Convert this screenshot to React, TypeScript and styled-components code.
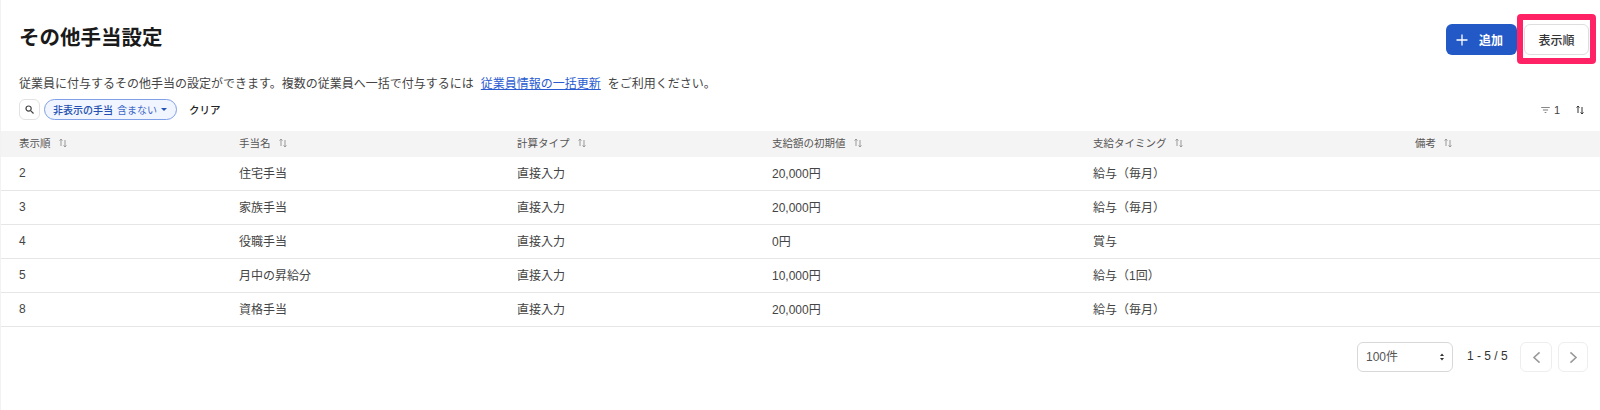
import React from "react";
import styled, { createGlobalStyle } from "styled-components";

const Global = createGlobalStyle`
  html, body { margin: 0; padding: 0; background: #fff; }
  body { font-family: "Liberation Sans", "Noto Sans CJK JP", sans-serif; color: #333; font-size: 12px; }
`;

const Page = styled.div`
  width: 1600px;
  height: 410px;
  box-sizing: border-box;
  overflow: hidden;
  border-left: 1px solid #f2f2f2;
  display: flex;
  flex-direction: column;
`;

const Head = styled.header`
  display: flex;
  justify-content: space-between;
  align-items: flex-start;
  height: 62px;
  padding: 14px 4px 0 18px;
`;

const Title = styled.h1`
  margin: 10px 0 0;
  font-size: 20.5px;
  line-height: 28px;
  font-weight: 700;
  color: #1a1a1a;
`;

const Actions = styled.div`
  display: flex;
  align-items: flex-start;
`;

const AddButton = styled.button`
  width: 71px;
  height: 31px;
  margin-top: 10px;
  border: 0;
  border-radius: 6px;
  background: #2359c6;
  color: #fff;
  font: 700 12px "Liberation Sans", "Noto Sans CJK JP", sans-serif;
  display: flex;
  align-items: center;
  justify-content: center;
  gap: 11px;
  padding: 0 4px 0 0;
`;

const Highlight = styled.div`
  box-sizing: border-box;
  width: 79px;
  height: 50px;
  border: 6px solid #ff2366;
  border-radius: 4px;
  padding: 4px 1px;
`;

const OrderButton = styled.button`
  box-sizing: border-box;
  width: 65px;
  height: 31px;
  border: 1px solid #dedede;
  border-radius: 6px;
  background: #fff;
  color: #333;
  font: 500 12px "Liberation Sans", "Noto Sans CJK JP", sans-serif;
  padding: 0;
`;

const Description = styled.p`
  margin: 0;
  padding-left: 18px;
  height: 16px;
  line-height: 16px;
  font-size: 12px;
  color: #444;
`;

const DocLink = styled.a`
  color: #2a5bd0;
  text-decoration: underline;
  margin: 0 7px;
`;

const FilterBar = styled.div`
  display: flex;
  align-items: center;
  height: 21px;
  margin-top: 7px;
  padding-left: 18px;
  padding-right: 16px;
`;

const SearchBox = styled.div`
  box-sizing: border-box;
  width: 21px;
  height: 21px;
  border: 1px solid #e2e2e2;
  border-radius: 6px;
  display: flex;
  align-items: center;
  justify-content: center;
  margin-right: 4px;
`;

const Chip = styled.div`
  box-sizing: border-box;
  width: 133px;
  height: 21px;
  border: 1px solid #7f9fe6;
  background: #f1f5ff;
  border-radius: 11px;
  color: #3f69c9;
  font-size: 10px;
  display: flex;
  align-items: center;
  padding-left: 8px;
  white-space: nowrap;
`;

const ChipStrong = styled.span`
  font-weight: 500;
  color: #2350b0;
  margin-right: 4px;
`;

const Caret = styled.span`
  width: 0;
  height: 0;
  margin-left: 4px;
  border-left: 3px solid transparent;
  border-right: 3px solid transparent;
  border-top: 3px solid #2451b5;
`;

const Clear = styled.span`
  margin-left: 12px;
  font-size: 10.5px;
  font-weight: 500;
  color: #222;
`;

const BarRight = styled.div`
  margin-left: auto;
  display: flex;
  align-items: center;
  gap: 4px;
  font-size: 11px;
  color: #444;
`;

const FilterGlyph = styled.svg`
  width: 9px;
  height: 6px;
`;

const CountIcons = styled.span`
  display: flex;
  align-items: center;
  margin-left: 12px;
`;

const Row = styled.div<{ $header?: boolean }>`
  display: grid;
  grid-template-columns: 220px 278px 255px 321px 322px 1fr;
  align-items: center;
  padding-left: 18px;
  box-sizing: border-box;
  height: ${(p) => (p.$header ? "26px" : "34px")};
  background: ${(p) => (p.$header ? "#f5f4f4" : "#fff")};
  border-bottom: ${(p) => (p.$header ? "0" : "1px solid #e6e6e6")};
  font-size: ${(p) => (p.$header ? "10.5px" : "12px")};
  color: ${(p) => (p.$header ? "#555" : "#444")};
`;

const TableHead = styled.div`
  margin-top: 11px;
`;

const HeadCell = styled.div`
  display: flex;
  align-items: center;
  gap: 8px;
  padding-bottom: 3px;
`;

const Cell = styled.div`
  padding-bottom: 2px;
`;

const Footer = styled.div`
  display: flex;
  align-items: center;
  height: 30px;
  margin-top: 15px;
  padding-left: 1356px;
`;

const PageSelect = styled.div`
  box-sizing: border-box;
  width: 96px;
  height: 30px;
  border: 1px solid #d8d8d8;
  border-radius: 6px;
  display: flex;
  align-items: center;
  justify-content: space-between;
  padding: 0 8px 0 8px;
  font-size: 12px;
  color: #555;
`;

const SelectLabel = styled.span`
  margin-top: -3px;
`;

const RangeText = styled.span`
  margin-left: 14px;
  margin-top: -3px;
  font-size: 12px;
  color: #333;
  width: 53px;
`;

const PagerButton = styled.button<{ $next?: boolean }>`
  box-sizing: border-box;
  width: ${(p) => (p.$next ? "30px" : "32px")};
  height: 30px;
  margin-right: 6px;
  border: 1px solid #eeeeee;
  border-radius: 6px;
  background: #fff;
  padding: 0;
  display: flex;
  align-items: center;
  justify-content: center;
`;

const SortIcon = ({ dark }: { dark?: boolean }) => (
  <svg width="8" height="10" viewBox="0 0 8 10" fill="none" stroke={dark ? "#333" : "#999"} strokeWidth="1">
    <path d="M2 8V1M0.6 2.6 2 1l1.4 1.6" />
    <path d="M6 2v7M4.6 7.4 6 9l1.4-1.6" />
  </svg>
);

const columns = ["表示順", "手当名", "計算タイプ", "支給額の初期値", "支給タイミング", "備考"];
const rows = [
  ["2", "住宅手当", "直接入力", "20,000円", "給与（毎月）", ""],
  ["3", "家族手当", "直接入力", "20,000円", "給与（毎月）", ""],
  ["4", "役職手当", "直接入力", "0円", "賞与", ""],
  ["5", "月中の昇給分", "直接入力", "10,000円", "給与（1回）", ""],
  ["8", "資格手当", "直接入力", "20,000円", "給与（毎月）", ""],
];

export default function App() {
  return (
    <Page>
      <Global />
      <Head>
        <Title>その他手当設定</Title>
        <Actions>
          <AddButton>
            <svg width="12" height="12" viewBox="0 0 12 12" stroke="#fff" strokeWidth="1.3">
              <path d="M6 .5v11M.5 6h11" />
            </svg>
            追加
          </AddButton>
          <Highlight>
            <OrderButton>表示順</OrderButton>
          </Highlight>
        </Actions>
      </Head>
      <Description>
        従業員に付与するその他手当の設定ができます。複数の従業員へ一括で付与するには
        <DocLink>従業員情報の一括更新</DocLink>
        をご利用ください。
      </Description>
      <FilterBar>
        <SearchBox>
          <svg width="9" height="9" viewBox="0 0 9 9" fill="none" stroke="#444" strokeWidth="1.2">
            <circle cx="3.6" cy="3.6" r="2.6" />
            <path d="M5.6 5.6 8.5 8.5" />
          </svg>
        </SearchBox>
        <Chip>
          <ChipStrong>非表示の手当</ChipStrong>含まない
          <Caret />
        </Chip>
        <Clear>クリア</Clear>
        <BarRight>
          <FilterGlyph viewBox="0 0 10 7" fill="none" stroke="#666" strokeWidth="1">
            <path d="M0 .5h10M2 3.5h6M4 6.5h2" />
          </FilterGlyph>
          1
          <CountIcons>
            <SortIcon dark />
          </CountIcons>
        </BarRight>
      </FilterBar>
      <TableHead>
        <Row $header>
          {columns.map((c) => (
            <HeadCell key={c}>
              {c}
              <SortIcon />
            </HeadCell>
          ))}
        </Row>
      </TableHead>
      {rows.map((r) => (
        <Row key={r[0]}>
          {r.map((v, i) => (
            <Cell key={i}>{v}</Cell>
          ))}
        </Row>
      ))}
      <Footer>
        <PageSelect>
          <SelectLabel>100件</SelectLabel>
          <svg width="4" height="8" viewBox="0 0 5 9" fill="#333">
            <path d="M2.5 0 5 3.4H0zM2.5 9 0 5.6h5z" />
          </svg>
        </PageSelect>
        <RangeText>1 - 5 / 5</RangeText>
        <PagerButton>
          <svg width="9" height="13" viewBox="0 0 9 14" fill="none" stroke="#999" strokeWidth="1.7">
            <path d="M7.8 1.5 1.8 7l6 5.5" />
          </svg>
        </PagerButton>
        <PagerButton $next>
          <svg width="9" height="13" viewBox="0 0 9 14" fill="none" stroke="#999" strokeWidth="1.7">
            <path d="M1.2 1.5 7.2 7l-6 5.5" />
          </svg>
        </PagerButton>
      </Footer>
    </Page>
  );
}
